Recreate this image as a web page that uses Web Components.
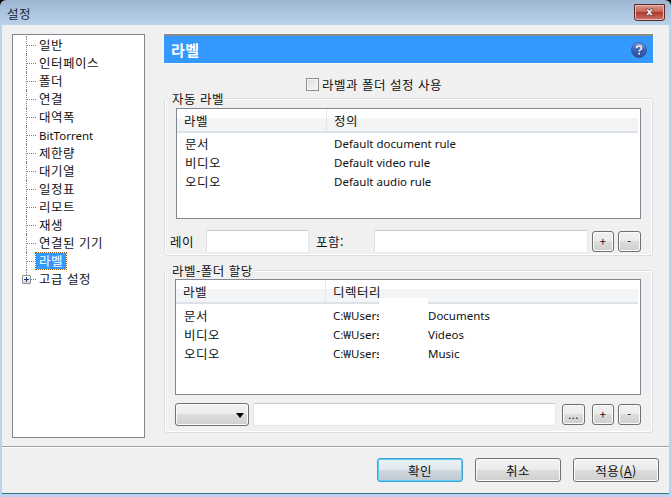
<!DOCTYPE html>
<html lang="ko">
<head>
<meta charset="utf-8">
<title>설정</title>
<style>
html, body { margin: 0; padding: 0; background: #000; }
body { font: 12.5px/15px "Noto Sans CJK KR", "Noto Sans", sans-serif; letter-spacing: .5px; color: #111; }
.latin { font-family: "Noto Sans", sans-serif; font-size: 11.5px; letter-spacing: 0; }
</style>
</head>
<body>
<settings-window caption="설정">
  <tree-view slot="side">
    <tree-item>일반</tree-item>
    <tree-item>인터페이스</tree-item>
    <tree-item>폴더</tree-item>
    <tree-item>연결</tree-item>
    <tree-item>대역폭</tree-item>
    <tree-item><span class="latin">BitTorrent</span></tree-item>
    <tree-item>제한량</tree-item>
    <tree-item>대기열</tree-item>
    <tree-item>일정표</tree-item>
    <tree-item>리모트</tree-item>
    <tree-item>재생</tree-item>
    <tree-item>연결된 기기</tree-item>
    <tree-item selected>라벨</tree-item>
    <tree-item expandable last>고급 설정</tree-item>
  </tree-view>

  <label-page slot="main" heading="라벨">
    <check-box>라벨과 폴더 설정 사용</check-box>

    <group-box legend="자동 라벨" style="height:158px">
      <list-view first="라벨" second="정의" style="height:111px;margin:9px 0 0 11px;width:465px;--rows-top:0">
        <list-row><span>문서</span><span class="latin">Default document rule</span></list-row>
        <list-row><span>비디오</span><span class="latin">Default video rule</span></list-row>
        <list-row><span>오디오</span><span class="latin">Default audio rule</span></list-row>
      </list-view>
      <form-row style="margin:11px 0 0 5px">
        <span style="width:36px">레이</span>
        <text-field style="width:103px"></text-field>
        <span style="width:58px;margin-left:7px">포함:</span>
        <text-field style="width:214px"></text-field>
        <win-button small style="margin-left:4px">+</win-button>
        <win-button small style="margin-left:4px;width:23px">-</win-button>
      </form-row>
    </group-box>

    <group-box legend="라벨-폴더 할당" style="height:163px;margin-top:14px">
      <list-view first="라벨" second="디렉터리" redacted style="height:116px;margin:8px 0 0 10px;width:466px">
        <list-row><span>문서</span><path-cell class="latin" name="Documents"></path-cell></list-row>
        <list-row><span>비디오</span><path-cell class="latin" name="Videos"></path-cell></list-row>
        <list-row><span>오디오</span><path-cell class="latin" name="Music"></path-cell></list-row>
      </list-view>
      <form-row style="margin:8px 0 0 10px">
        <drop-down></drop-down>
        <text-field style="width:303px;margin-left:4px"></text-field>
        <win-button small style="margin-left:6px;width:23px">...</win-button>
        <win-button small style="margin-left:7px">+</win-button>
        <win-button small style="margin-left:4px;width:23px">-</win-button>
      </form-row>
    </group-box>
  </label-page>

  <win-button slot="buttons" primary>확인</win-button>
  <win-button slot="buttons">취소</win-button>
  <win-button slot="buttons">적용(<u>A</u>)</win-button>
</settings-window>

<script>
'use strict'

class SettingsWindow extends HTMLElement {
    constructor() {
        super();
        const shadow = this.attachShadow({mode: 'open'});
        shadow.innerHTML = `
            <style>
            :host {
                background: linear-gradient(#9fb6d2, #bad2ec 25px, #bad2ec);
                border-radius: 6px 6px 0 0;
                box-sizing: border-box;
                display: flex;
                flex-direction: column;
                height: 497px;
                overflow: hidden;
                padding: 0 2px 3px 2px;
                width: 671px;
            }
            .title {
                align-items: center;
                box-sizing: border-box;
                color: #1c2530;
                display: flex;
                flex: none;
                height: 25px;
                justify-content: space-between;
                padding: 2px 4px 0 5px;
            }
            .close {
                background: linear-gradient(#d99a92, #c8635a 45%, #b03a2e 50%, #c9756a);
                border: 1px solid #5a2a28;
                border-radius: 0 0 3px 3px;
                box-shadow: inset 0 0 0 1px #e8b8b0;
                box-sizing: border-box;
                display: block;
                height: 17px;
                margin: -3px 0 0;
                width: 31px;
            }
            .client {
                background: #f0f0f0;
                border-bottom: 1px solid #3a6f90;
                display: flex;
                flex: 1;
                flex-direction: column;
                min-height: 0;
            }
            .top {
                box-sizing: border-box;
                display: flex;
                flex: none;
                height: 421px;
                padding: 9px 0 0 10px;
            }
            .buttons {
                border-top: 1px solid #a0a0a0;
                box-shadow: inset 0 1px 0 #fff;
                display: flex;
                flex: 1;
                gap: 12px;
                padding: 11px 10px 0 0;
                justify-content: flex-end;
            }
            </style>
            <div class="title">
                <span id="caption"></span>
                <svg class="close" viewBox="0 0 31 17">
                    <path d="M11 4.500h3l1.500 2 1.500-2h3l-3 3.700 3 3.800h-3l-1.500-2-1.500 2h-3l3-3.800z" fill="#fff" stroke="#5d3a3a" stroke-width=".8"/>
                </svg>
            </div>
            <div class="client">
                <div class="top">
                    <slot name="side"></slot>
                    <slot name="main"></slot>
                </div>
                <div class="buttons"><slot name="buttons"></slot></div>
            </div>
        `;
        shadow.getElementById('caption').textContent = this.getAttribute('caption');
    }
}

class TreeView extends HTMLElement {
    constructor() {
        super();
        this.attachShadow({mode: 'open'}).innerHTML = `
            <style>
            :host {
                background: #fff;
                border: 1px solid #828790;
                box-sizing: border-box;
                display: block;
                flex: none;
                height: 404px;
                padding: 1px 0 0 0;
                width: 133px;
            }
            </style>
            <slot></slot>
        `;
    }
}

class TreeItem extends HTMLElement {
    constructor() {
        super();
        const shadow = this.attachShadow({mode: 'open'});
        shadow.innerHTML = `
            <style>
            :host {
                align-items: center;
                box-sizing: border-box;
                display: flex;
                height: 18px;
                padding-left: 24px;
                position: relative;
                white-space: nowrap;
            }
            .v {
                border-left: 1px dotted #808080;
                bottom: 0;
                left: 13px;
                position: absolute;
                top: 0;
            }
            :host([last]) .v { bottom: 9px; }
            .h {
                border-top: 1px dotted #808080;
                left: 14px;
                position: absolute;
                top: 9px;
                width: 9px;
            }
            .text { padding: 0 2px; line-height: 16px; }
            :host([selected]) .text {
                background: #3399ff;
                color: #fff;
                outline: 1px dotted #a05a00;
                margin-left: -1px;
                padding: 0 3px 0 3px;
            }
            .plus {
                background: linear-gradient(#fff, #d8d8d8);
                border: 1px solid #919191;
                border-radius: 1px;
                box-sizing: border-box;
                display: none;
                height: 9px;
                left: 9px;
                position: absolute;
                top: 5px;
                width: 9px;
            }
            :host([expandable]) .plus { display: block; }
            .plus::before, .plus::after {
                background: #1f3a78;
                content: '';
                position: absolute;
            }
            .plus::before { height: 1px; left: 1px; top: 3px; width: 5px; }
            .plus::after { height: 5px; left: 3px; top: 1px; width: 1px; }
            </style>
            <span class="v"></span><span class="h"></span><span class="plus"></span>
            <span class="text"><slot></slot></span>
        `;
    }
}

class LabelPage extends HTMLElement {
    constructor() {
        super();
        const shadow = this.attachShadow({mode: 'open'});
        shadow.innerHTML = `
            <style>
            :host {
                display: block;
                flex: none;
                margin-left: 19px;
                width: 489px;
            }
            .banner {
                align-items: center;
                background: #3399ff;
                border-top: 2px solid #8a8a8a;
                box-shadow: 0 0 0 1px #f8f8f8;
                box-sizing: border-box;
                color: #fff;
                display: flex;
                font-size: 15px;
                font-weight: bold;
                height: 29px;
                justify-content: space-between;
                padding: 0 6px 0 7px;
            }
            svg { display: block; height: 16px; width: 16px; }
            </style>
            <div class="banner">
                <span id="heading"></span>
                <svg viewBox="0 0 16 16">
                    <defs>
                        <linearGradient id="orb" x1="0" y1="0" x2="0" y2="1">
                            <stop offset="0" stop-color="#8ea6d8"/>
                            <stop offset=".5" stop-color="#3f62b0"/>
                            <stop offset="1" stop-color="#2c4c9c"/>
                        </linearGradient>
                    </defs>
                    <circle cx="8" cy="8" r="7.500" fill="url(#orb)" stroke="#2b4a8c" stroke-width=".7"/>
                    <path d="M5.600 6.100c0-3 4.900-3 4.900-.1 0 1.800-2.300 1.700-2.300 3.500" fill="none" stroke="#fff" stroke-width="1.400"/>
                    <rect x="7.400" y="10.800" width="1.600" height="1.700" fill="#fff"/>
                </svg>
            </div>
            <slot></slot>
        `;
        shadow.getElementById('heading').textContent = this.getAttribute('heading');
    }
}

class CheckBox extends HTMLElement {
    constructor() {
        super();
        this.attachShadow({mode: 'open'}).innerHTML = `
            <style>
            :host {
                align-items: center;
                display: flex;
                gap: 3px;
                height: 15px;
                justify-content: center;
                margin: 14px 0 6px 0;
                padding-right: 69px;
            }
            .box {
                background: linear-gradient(135deg, #dcdcdc, #f6f6f6);
                border: 1px solid #8e8f8f;
                box-shadow: inset 0 0 0 1px #f4f4f4;
                box-sizing: border-box;
                height: 13px;
                width: 13px;
            }
            </style>
            <span class="box"></span><span><slot></slot></span>
        `;
    }
}

class GroupBox extends HTMLElement {
    constructor() {
        super();
        const shadow = this.attachShadow({mode: 'open'});
        shadow.innerHTML = `
            <style>
            :host {
                border: 1px solid #d9dfe4;
                border-radius: 3px;
                box-shadow: inset 0 0 0 1px #fff;
                box-sizing: border-box;
                display: block;
                position: relative;
            }
            .legend {
                background: #f0f0f0;
                left: 6px;
                line-height: 14px;
                padding: 0 1px;
                position: absolute;
                top: -7px;
            }
            .body { display: flex; flex-direction: column; }
            </style>
            <span class="legend" id="legend"></span>
            <div class="body"><slot></slot></div>
        `;
        shadow.getElementById('legend').textContent = this.getAttribute('legend');
    }
}

class ListView extends HTMLElement {
    constructor() {
        super();
        const shadow = this.attachShadow({mode: 'open'});
        shadow.innerHTML = `
            <style>
            :host {
                background: #fff;
                border: 1px solid #828790;
                box-sizing: border-box;
                display: block;
                flex: none;
                position: relative;
            }
            .head {
                background: linear-gradient(#fff 40%, #f3f4f6 41%, #f3f4f6);
                border-bottom: 2px solid #dde2e8;
                box-sizing: border-box;
                display: flex;
                height: 24px;
                margin-bottom: 1px;
                align-items: center;
                margin-right: 2px;
            }
            .head span { box-sizing: border-box; padding: 1px 0 0 7px; }
            .head .a { border-right: 1px solid #e3e6ea; height: 22px; line-height: 21px; width: 150px; }
            .mask {
                background: #fff;
                display: none;
                height: 64px;
                left: 203px;
                position: absolute;
                top: 18px;
                width: 49px;
            }
            :host([redacted]) .mask { display: block; }
            .rows { padding-top: var(--rows-top, 1px); }
            </style>
            <div class="head">
                <span class="a" id="first"></span>
                <span class="b" id="second"></span>
            </div>
            <div class="rows"><slot></slot></div>
            <span class="mask"></span>
        `;
        shadow.getElementById('first').textContent = this.getAttribute('first');
        shadow.getElementById('second').textContent = this.getAttribute('second');
    }
}

class ListRow extends HTMLElement {
    constructor() {
        super();
        this.attachShadow({mode: 'open'}).innerHTML = `
            <style>
            :host {
                display: grid;
                grid-template-columns: 149px 1fr;
                height: 19px;
                line-height: 19px;
                padding-left: 8px;
                white-space: nowrap;
            }
            </style>
            <slot></slot>
        `;
    }
}

class PathCell extends HTMLElement {
    constructor() {
        super();
        const shadow = this.attachShadow({mode: 'open'});
        shadow.innerHTML = `
            <style>
            :host { display: flex; }
            .root { overflow: hidden; width: 95px; }
            </style>
            <span class="root">C:₩Users</span>
            <span id="name"></span>
        `;
        shadow.getElementById('name').textContent = this.getAttribute('name');
    }
}

class FormRow extends HTMLElement {
    constructor() {
        super();
        this.attachShadow({mode: 'open'}).innerHTML = `
            <style>
            :host { align-items: center; display: flex; height: 23px; white-space: nowrap; }
            </style>
            <slot></slot>
        `;
    }
}

class TextField extends HTMLElement {
    constructor() {
        super();
        this.attachShadow({mode: 'open'}).innerHTML = `
            <style>
            :host {
                background: #fff;
                border: 1px solid;
                border-color: #c6c9cc #e3e6e9 #e6e9ec #e0e3e6;
                border-radius: 2px;
                box-sizing: border-box;
                display: block;
                flex: none;
                height: 23px;
            }
            </style>
        `;
    }
}

class WinButton extends HTMLElement {
    constructor() {
        super();
        this.attachShadow({mode: 'open'}).innerHTML = `
            <style>
            :host {
                align-items: center;
                background: linear-gradient(#f2f2f2, #ebebeb 49%, #dddddd 50%, #cfcfcf);
                border: 1px solid #707070;
                border-radius: 3px;
                box-shadow: inset 0 0 0 1px #fbfbfb;
                box-sizing: border-box;
                display: flex;
                flex: none;
                height: 24px;
                justify-content: center;
                width: 86px;
            }
            :host([small]) { height: 21px; width: 22px; font-size: 11px; }
            :host([primary]) {
                background: linear-gradient(#eaf2f6, #dfe8ee 49%, #ccd6dd 50%, #bfcad2);
                border-color: #3c9fd0;
                box-shadow: inset 0 0 0 1px #5fd0f5;
            }
            </style>
            <slot></slot>
        `;
    }
}

class DropDown extends HTMLElement {
    constructor() {
        super();
        this.attachShadow({mode: 'open'}).innerHTML = `
            <style>
            :host {
                background: linear-gradient(#f2f2f2, #ebebeb 49%, #dddddd 50%, #cfcfcf);
                border: 1px solid #707070;
                border-radius: 3px;
                box-shadow: inset 0 0 0 1px #fbfbfb;
                box-sizing: border-box;
                display: block;
                flex: none;
                height: 23px;
                position: relative;
                width: 74px;
            }
            svg { height: 5px; position: absolute; right: 4px; top: 9px; width: 8px; }
            </style>
            <svg viewBox="0 0 8 5"><path d="M0 0h8L4 5z" fill="#000"/></svg>
        `;
    }
}

customElements.define('settings-window', SettingsWindow);
customElements.define('tree-view', TreeView);
customElements.define('tree-item', TreeItem);
customElements.define('label-page', LabelPage);
customElements.define('check-box', CheckBox);
customElements.define('group-box', GroupBox);
customElements.define('list-view', ListView);
customElements.define('list-row', ListRow);
customElements.define('path-cell', PathCell);
customElements.define('form-row', FormRow);
customElements.define('text-field', TextField);
customElements.define('win-button', WinButton);
customElements.define('drop-down', DropDown);
</script>
</body>
</html>
